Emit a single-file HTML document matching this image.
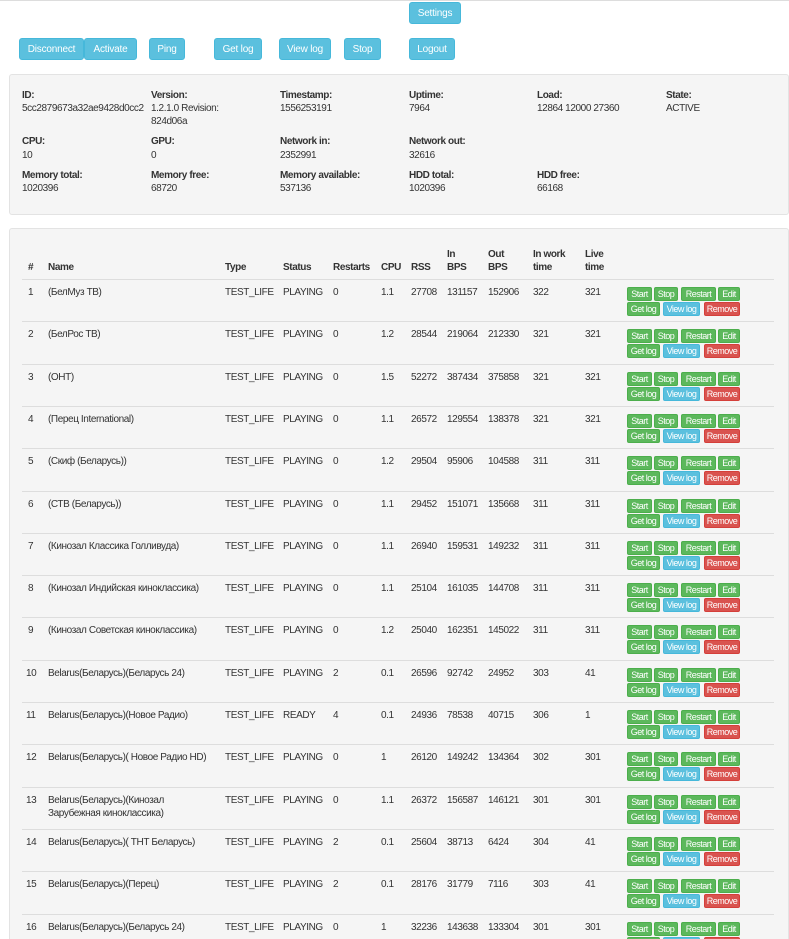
<!DOCTYPE html>
<html><head><meta charset="utf-8"><style>
*{box-sizing:border-box;margin:0;padding:0}
html,body{width:789px;height:939px;overflow:hidden}
body{background:#fff;font-family:"Liberation Sans",Arial,sans-serif;font-size:10px;color:#333;position:relative;letter-spacing:-0.4px}
.topline{position:absolute;left:0;top:0;width:789px;height:1px;background:#ddd}
.b{position:absolute;background:#5bc0de;border:1px solid #46b8da;border-radius:3px;color:#fff;font-size:10px;text-align:center;line-height:21px;height:22px;letter-spacing:-0.2px}
.panel{position:absolute;background:#f5f5f5;border:1px solid #e3e3e3;border-radius:3px}
.i{position:absolute;line-height:13px;font-size:10px}
.i b{display:block;font-weight:bold;color:#333}
.hd{position:absolute;font-weight:bold;line-height:13px}
.row{position:absolute;left:22px;width:752px;height:42.3px;border-top:1px solid #ddd}
.row span{position:absolute;top:6px;line-height:13px;white-space:nowrap}
.a{position:absolute;height:14px;line-height:13px;font-size:9px;color:#fff;text-align:center;border-radius:2px;letter-spacing:-0.5px;white-space:nowrap;overflow:hidden}
.g{background:#5cb85c;border:1px solid #4cae4c}
.c{background:#5bc0de;border:1px solid #46b8da}
.r{background:#d9534f;border:1px solid #d43f3a}
</style></head><body>
<div class="topline"></div>
<div class="b" style="left:409px;top:2px;width:52px">Settings</div>
<div class="b" style="left:19px;top:38px;width:65px">Disconnect</div>
<div class="b" style="left:84px;top:38px;width:53px">Activate</div>
<div class="b" style="left:149px;top:38px;width:36px">Ping</div>
<div class="b" style="left:214px;top:38px;width:48px">Get log</div>
<div class="b" style="left:279px;top:38px;width:52px">View log</div>
<div class="b" style="left:344px;top:38px;width:37px">Stop</div>
<div class="b" style="left:409px;top:38px;width:46px">Logout</div>

<div class="panel" style="left:9px;top:74px;width:780px;height:141px"></div>
<div class="i" style="left:22px;top:89px"><b>ID:</b>5cc2879673a32ae9428d0cc2</div>
<div class="i" style="left:151px;top:89px;width:100px"><b>Version:</b>1.2.1.0 Revision: 824d06a</div>
<div class="i" style="left:280px;top:89px"><b>Timestamp:</b>1556253191</div>
<div class="i" style="left:409px;top:89px"><b>Uptime:</b>7964</div>
<div class="i" style="left:537px;top:89px"><b>Load:</b>12864 12000 27360</div>
<div class="i" style="left:666px;top:89px"><b>State:</b>ACTIVE</div>
<div class="i" style="left:22px;top:135px;line-height:14px"><b>CPU:</b>10</div>
<div class="i" style="left:151px;top:135px;line-height:14px"><b>GPU:</b>0</div>
<div class="i" style="left:280px;top:135px;line-height:14px"><b>Network in:</b>2352991</div>
<div class="i" style="left:409px;top:135px;line-height:14px"><b>Network out:</b>32616</div>
<div class="i" style="left:22px;top:169px"><b>Memory total:</b>1020396</div>
<div class="i" style="left:151px;top:169px"><b>Memory free:</b>68720</div>
<div class="i" style="left:280px;top:169px"><b>Memory available:</b>537136</div>
<div class="i" style="left:409px;top:169px"><b>HDD total:</b>1020396</div>
<div class="i" style="left:537px;top:169px"><b>HDD free:</b>66168</div>

<div class="panel" style="left:9px;top:228px;width:780px;height:720px"></div>
<div class="hd" style="left:28px;top:261px">#</div>
<div class="hd" style="left:48px;top:261px">Name</div>
<div class="hd" style="left:225px;top:261px">Type</div>
<div class="hd" style="left:283px;top:261px">Status</div>
<div class="hd" style="left:333px;top:261px">Restarts</div>
<div class="hd" style="left:381px;top:261px">CPU</div>
<div class="hd" style="left:411px;top:261px">RSS</div>
<div class="hd" style="left:447px;top:248px">In<br>BPS</div>
<div class="hd" style="left:488px;top:248px">Out<br>BPS</div>
<div class="hd" style="left:533px;top:248px">In work<br>time</div>
<div class="hd" style="left:585px;top:248px">Live<br>time</div>

<div class="row" style="top:279px"><span style="left:6px">1</span><span style="left:26px">(БелМуз ТВ)</span><span style="left:203px">TEST_LIFE</span><span style="left:261px">PLAYING</span><span style="left:311px">0</span><span style="left:359px">1.1</span><span style="left:389px">27708</span><span style="left:425px">131157</span><span style="left:466px">152906</span><span style="left:511px">322</span><span style="left:563px">321</span><div class="a g" style="left:605px;top:7px;width:25px">Start</div><div class="a g" style="left:632px;top:7px;width:24px">Stop</div><div class="a g" style="left:659px;top:7px;width:35px">Restart</div><div class="a g" style="left:696px;top:7px;width:22px">Edit</div><div class="a g" style="left:605px;top:22px;width:33px">Get log</div><div class="a c" style="left:641px;top:22px;width:37px">View log</div><div class="a r" style="left:682px;top:22px;width:36px">Remove</div></div>
<div class="row" style="top:321.3px"><span style="left:6px">2</span><span style="left:26px">(БелРос ТВ)</span><span style="left:203px">TEST_LIFE</span><span style="left:261px">PLAYING</span><span style="left:311px">0</span><span style="left:359px">1.2</span><span style="left:389px">28544</span><span style="left:425px">219064</span><span style="left:466px">212330</span><span style="left:511px">321</span><span style="left:563px">321</span><div class="a g" style="left:605px;top:7px;width:25px">Start</div><div class="a g" style="left:632px;top:7px;width:24px">Stop</div><div class="a g" style="left:659px;top:7px;width:35px">Restart</div><div class="a g" style="left:696px;top:7px;width:22px">Edit</div><div class="a g" style="left:605px;top:22px;width:33px">Get log</div><div class="a c" style="left:641px;top:22px;width:37px">View log</div><div class="a r" style="left:682px;top:22px;width:36px">Remove</div></div>
<div class="row" style="top:363.6px"><span style="left:6px">3</span><span style="left:26px">(ОНТ)</span><span style="left:203px">TEST_LIFE</span><span style="left:261px">PLAYING</span><span style="left:311px">0</span><span style="left:359px">1.5</span><span style="left:389px">52272</span><span style="left:425px">387434</span><span style="left:466px">375858</span><span style="left:511px">321</span><span style="left:563px">321</span><div class="a g" style="left:605px;top:7px;width:25px">Start</div><div class="a g" style="left:632px;top:7px;width:24px">Stop</div><div class="a g" style="left:659px;top:7px;width:35px">Restart</div><div class="a g" style="left:696px;top:7px;width:22px">Edit</div><div class="a g" style="left:605px;top:22px;width:33px">Get log</div><div class="a c" style="left:641px;top:22px;width:37px">View log</div><div class="a r" style="left:682px;top:22px;width:36px">Remove</div></div>
<div class="row" style="top:405.9px"><span style="left:6px">4</span><span style="left:26px">(Перец International)</span><span style="left:203px">TEST_LIFE</span><span style="left:261px">PLAYING</span><span style="left:311px">0</span><span style="left:359px">1.1</span><span style="left:389px">26572</span><span style="left:425px">129554</span><span style="left:466px">138378</span><span style="left:511px">321</span><span style="left:563px">321</span><div class="a g" style="left:605px;top:7px;width:25px">Start</div><div class="a g" style="left:632px;top:7px;width:24px">Stop</div><div class="a g" style="left:659px;top:7px;width:35px">Restart</div><div class="a g" style="left:696px;top:7px;width:22px">Edit</div><div class="a g" style="left:605px;top:22px;width:33px">Get log</div><div class="a c" style="left:641px;top:22px;width:37px">View log</div><div class="a r" style="left:682px;top:22px;width:36px">Remove</div></div>
<div class="row" style="top:448.2px"><span style="left:6px">5</span><span style="left:26px">(Скиф (Беларусь))</span><span style="left:203px">TEST_LIFE</span><span style="left:261px">PLAYING</span><span style="left:311px">0</span><span style="left:359px">1.2</span><span style="left:389px">29504</span><span style="left:425px">95906</span><span style="left:466px">104588</span><span style="left:511px">311</span><span style="left:563px">311</span><div class="a g" style="left:605px;top:7px;width:25px">Start</div><div class="a g" style="left:632px;top:7px;width:24px">Stop</div><div class="a g" style="left:659px;top:7px;width:35px">Restart</div><div class="a g" style="left:696px;top:7px;width:22px">Edit</div><div class="a g" style="left:605px;top:22px;width:33px">Get log</div><div class="a c" style="left:641px;top:22px;width:37px">View log</div><div class="a r" style="left:682px;top:22px;width:36px">Remove</div></div>
<div class="row" style="top:490.5px"><span style="left:6px">6</span><span style="left:26px">(СТВ (Беларусь))</span><span style="left:203px">TEST_LIFE</span><span style="left:261px">PLAYING</span><span style="left:311px">0</span><span style="left:359px">1.1</span><span style="left:389px">29452</span><span style="left:425px">151071</span><span style="left:466px">135668</span><span style="left:511px">311</span><span style="left:563px">311</span><div class="a g" style="left:605px;top:7px;width:25px">Start</div><div class="a g" style="left:632px;top:7px;width:24px">Stop</div><div class="a g" style="left:659px;top:7px;width:35px">Restart</div><div class="a g" style="left:696px;top:7px;width:22px">Edit</div><div class="a g" style="left:605px;top:22px;width:33px">Get log</div><div class="a c" style="left:641px;top:22px;width:37px">View log</div><div class="a r" style="left:682px;top:22px;width:36px">Remove</div></div>
<div class="row" style="top:532.8px"><span style="left:6px">7</span><span style="left:26px">(Кинозал Классика Голливуда)</span><span style="left:203px">TEST_LIFE</span><span style="left:261px">PLAYING</span><span style="left:311px">0</span><span style="left:359px">1.1</span><span style="left:389px">26940</span><span style="left:425px">159531</span><span style="left:466px">149232</span><span style="left:511px">311</span><span style="left:563px">311</span><div class="a g" style="left:605px;top:7px;width:25px">Start</div><div class="a g" style="left:632px;top:7px;width:24px">Stop</div><div class="a g" style="left:659px;top:7px;width:35px">Restart</div><div class="a g" style="left:696px;top:7px;width:22px">Edit</div><div class="a g" style="left:605px;top:22px;width:33px">Get log</div><div class="a c" style="left:641px;top:22px;width:37px">View log</div><div class="a r" style="left:682px;top:22px;width:36px">Remove</div></div>
<div class="row" style="top:575.1px"><span style="left:6px">8</span><span style="left:26px">(Кинозал Индийская киноклассика)</span><span style="left:203px">TEST_LIFE</span><span style="left:261px">PLAYING</span><span style="left:311px">0</span><span style="left:359px">1.1</span><span style="left:389px">25104</span><span style="left:425px">161035</span><span style="left:466px">144708</span><span style="left:511px">311</span><span style="left:563px">311</span><div class="a g" style="left:605px;top:7px;width:25px">Start</div><div class="a g" style="left:632px;top:7px;width:24px">Stop</div><div class="a g" style="left:659px;top:7px;width:35px">Restart</div><div class="a g" style="left:696px;top:7px;width:22px">Edit</div><div class="a g" style="left:605px;top:22px;width:33px">Get log</div><div class="a c" style="left:641px;top:22px;width:37px">View log</div><div class="a r" style="left:682px;top:22px;width:36px">Remove</div></div>
<div class="row" style="top:617.4px"><span style="left:6px">9</span><span style="left:26px">(Кинозал Советская киноклассика)</span><span style="left:203px">TEST_LIFE</span><span style="left:261px">PLAYING</span><span style="left:311px">0</span><span style="left:359px">1.2</span><span style="left:389px">25040</span><span style="left:425px">162351</span><span style="left:466px">145022</span><span style="left:511px">311</span><span style="left:563px">311</span><div class="a g" style="left:605px;top:7px;width:25px">Start</div><div class="a g" style="left:632px;top:7px;width:24px">Stop</div><div class="a g" style="left:659px;top:7px;width:35px">Restart</div><div class="a g" style="left:696px;top:7px;width:22px">Edit</div><div class="a g" style="left:605px;top:22px;width:33px">Get log</div><div class="a c" style="left:641px;top:22px;width:37px">View log</div><div class="a r" style="left:682px;top:22px;width:36px">Remove</div></div>
<div class="row" style="top:659.7px"><span style="left:4px">10</span><span style="left:26px">Belarus(Беларусь)(Беларусь 24)</span><span style="left:203px">TEST_LIFE</span><span style="left:261px">PLAYING</span><span style="left:311px">2</span><span style="left:359px">0.1</span><span style="left:389px">26596</span><span style="left:425px">92742</span><span style="left:466px">24952</span><span style="left:511px">303</span><span style="left:563px">41</span><div class="a g" style="left:605px;top:7px;width:25px">Start</div><div class="a g" style="left:632px;top:7px;width:24px">Stop</div><div class="a g" style="left:659px;top:7px;width:35px">Restart</div><div class="a g" style="left:696px;top:7px;width:22px">Edit</div><div class="a g" style="left:605px;top:22px;width:33px">Get log</div><div class="a c" style="left:641px;top:22px;width:37px">View log</div><div class="a r" style="left:682px;top:22px;width:36px">Remove</div></div>
<div class="row" style="top:702px"><span style="left:4px">11</span><span style="left:26px">Belarus(Беларусь)(Новое Радио)</span><span style="left:203px">TEST_LIFE</span><span style="left:261px">READY</span><span style="left:311px">4</span><span style="left:359px">0.1</span><span style="left:389px">24936</span><span style="left:425px">78538</span><span style="left:466px">40715</span><span style="left:511px">306</span><span style="left:563px">1</span><div class="a g" style="left:605px;top:7px;width:25px">Start</div><div class="a g" style="left:632px;top:7px;width:24px">Stop</div><div class="a g" style="left:659px;top:7px;width:35px">Restart</div><div class="a g" style="left:696px;top:7px;width:22px">Edit</div><div class="a g" style="left:605px;top:22px;width:33px">Get log</div><div class="a c" style="left:641px;top:22px;width:37px">View log</div><div class="a r" style="left:682px;top:22px;width:36px">Remove</div></div>
<div class="row" style="top:744.3px"><span style="left:4px">12</span><span style="left:26px">Belarus(Беларусь)( Новое Радио HD)</span><span style="left:203px">TEST_LIFE</span><span style="left:261px">PLAYING</span><span style="left:311px">0</span><span style="left:359px">1</span><span style="left:389px">26120</span><span style="left:425px">149242</span><span style="left:466px">134364</span><span style="left:511px">302</span><span style="left:563px">301</span><div class="a g" style="left:605px;top:7px;width:25px">Start</div><div class="a g" style="left:632px;top:7px;width:24px">Stop</div><div class="a g" style="left:659px;top:7px;width:35px">Restart</div><div class="a g" style="left:696px;top:7px;width:22px">Edit</div><div class="a g" style="left:605px;top:22px;width:33px">Get log</div><div class="a c" style="left:641px;top:22px;width:37px">View log</div><div class="a r" style="left:682px;top:22px;width:36px">Remove</div></div>
<div class="row" style="top:786.6px"><span style="left:4px">13</span><span style="left:26px">Belarus(Беларусь)(Кинозал<br>Зарубежная киноклассика)</span><span style="left:203px">TEST_LIFE</span><span style="left:261px">PLAYING</span><span style="left:311px">0</span><span style="left:359px">1.1</span><span style="left:389px">26372</span><span style="left:425px">156587</span><span style="left:466px">146121</span><span style="left:511px">301</span><span style="left:563px">301</span><div class="a g" style="left:605px;top:7px;width:25px">Start</div><div class="a g" style="left:632px;top:7px;width:24px">Stop</div><div class="a g" style="left:659px;top:7px;width:35px">Restart</div><div class="a g" style="left:696px;top:7px;width:22px">Edit</div><div class="a g" style="left:605px;top:22px;width:33px">Get log</div><div class="a c" style="left:641px;top:22px;width:37px">View log</div><div class="a r" style="left:682px;top:22px;width:36px">Remove</div></div>
<div class="row" style="top:828.9px"><span style="left:4px">14</span><span style="left:26px">Belarus(Беларусь)( ТНТ Беларусь)</span><span style="left:203px">TEST_LIFE</span><span style="left:261px">PLAYING</span><span style="left:311px">2</span><span style="left:359px">0.1</span><span style="left:389px">25604</span><span style="left:425px">38713</span><span style="left:466px">6424</span><span style="left:511px">304</span><span style="left:563px">41</span><div class="a g" style="left:605px;top:7px;width:25px">Start</div><div class="a g" style="left:632px;top:7px;width:24px">Stop</div><div class="a g" style="left:659px;top:7px;width:35px">Restart</div><div class="a g" style="left:696px;top:7px;width:22px">Edit</div><div class="a g" style="left:605px;top:22px;width:33px">Get log</div><div class="a c" style="left:641px;top:22px;width:37px">View log</div><div class="a r" style="left:682px;top:22px;width:36px">Remove</div></div>
<div class="row" style="top:871.2px"><span style="left:4px">15</span><span style="left:26px">Belarus(Беларусь)(Перец)</span><span style="left:203px">TEST_LIFE</span><span style="left:261px">PLAYING</span><span style="left:311px">2</span><span style="left:359px">0.1</span><span style="left:389px">28176</span><span style="left:425px">31779</span><span style="left:466px">7116</span><span style="left:511px">303</span><span style="left:563px">41</span><div class="a g" style="left:605px;top:7px;width:25px">Start</div><div class="a g" style="left:632px;top:7px;width:24px">Stop</div><div class="a g" style="left:659px;top:7px;width:35px">Restart</div><div class="a g" style="left:696px;top:7px;width:22px">Edit</div><div class="a g" style="left:605px;top:22px;width:33px">Get log</div><div class="a c" style="left:641px;top:22px;width:37px">View log</div><div class="a r" style="left:682px;top:22px;width:36px">Remove</div></div>
<div class="row" style="top:913.5px"><span style="left:4px">16</span><span style="left:26px">Belarus(Беларусь)(Беларусь 24)</span><span style="left:203px">TEST_LIFE</span><span style="left:261px">PLAYING</span><span style="left:311px">0</span><span style="left:359px">1</span><span style="left:389px">32236</span><span style="left:425px">143638</span><span style="left:466px">133304</span><span style="left:511px">301</span><span style="left:563px">301</span><div class="a g" style="left:605px;top:7px;width:25px">Start</div><div class="a g" style="left:632px;top:7px;width:24px">Stop</div><div class="a g" style="left:659px;top:7px;width:35px">Restart</div><div class="a g" style="left:696px;top:7px;width:22px">Edit</div><div class="a g" style="left:605px;top:22px;width:33px">Get log</div><div class="a c" style="left:641px;top:22px;width:37px">View log</div><div class="a r" style="left:682px;top:22px;width:36px">Remove</div></div>
</body></html>
